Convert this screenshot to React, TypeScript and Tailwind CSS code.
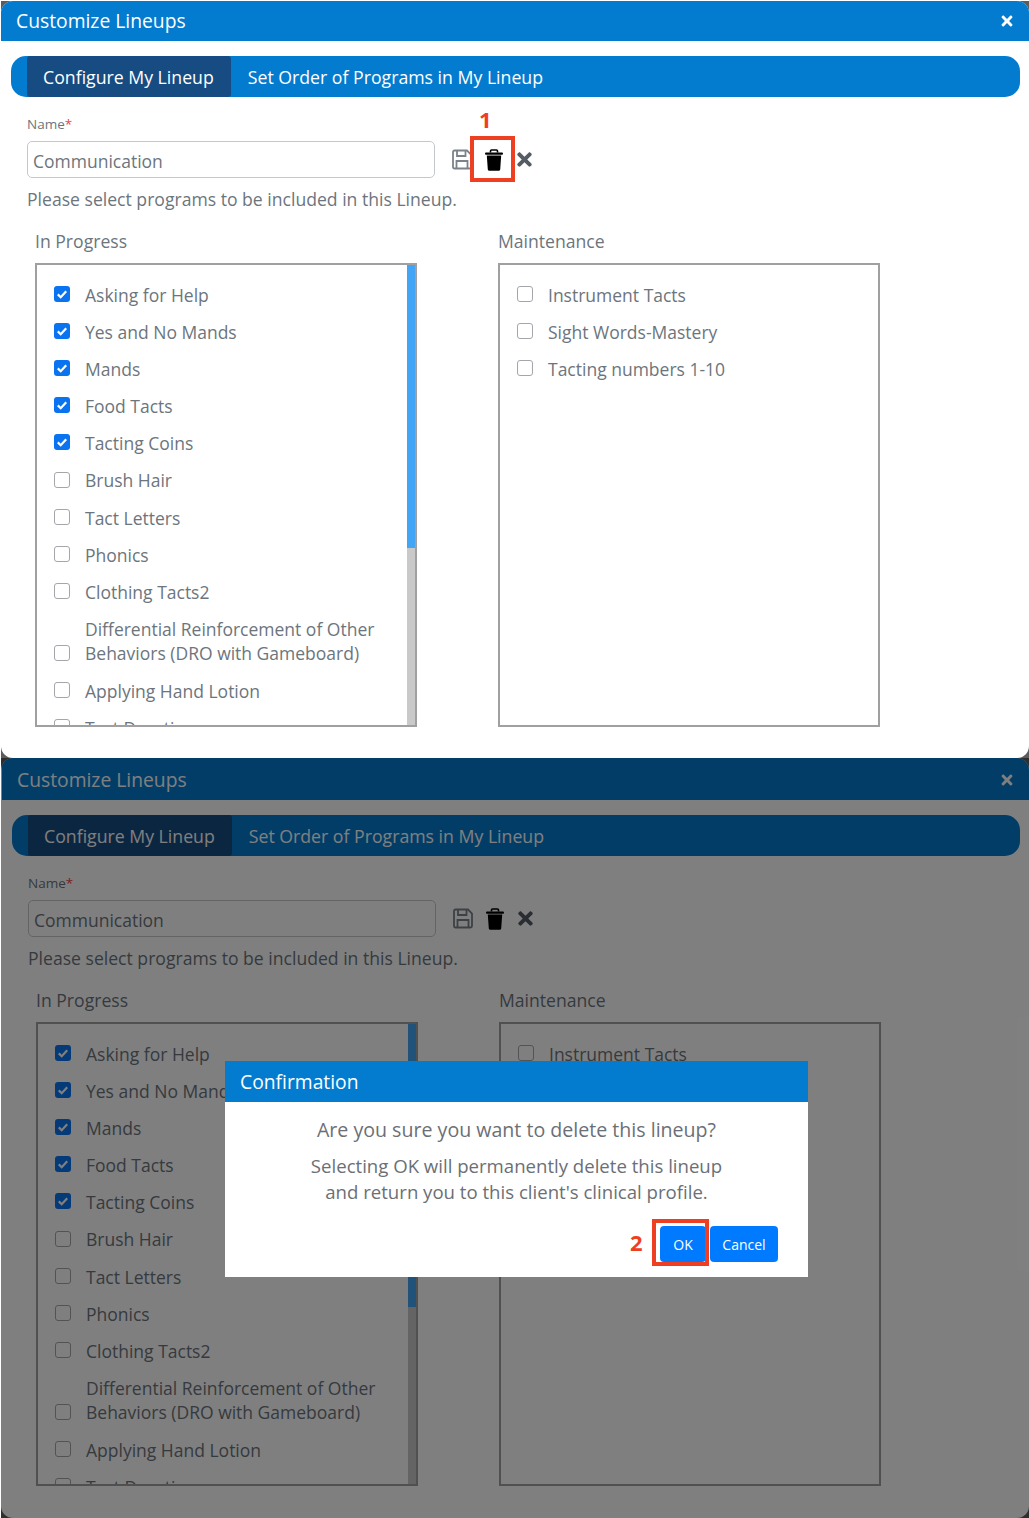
import React from "react";
import { FaTimes } from "react-icons/fa";

const FONT = "font-['Open_Sans','Noto_Sans',sans-serif]";

type Item = { label: React.ReactNode; checked?: boolean };

const inProgress: Item[] = [
  { label: "Asking for Help", checked: true },
  { label: "Yes and No Mands", checked: true },
  { label: "Mands", checked: true },
  { label: "Food Tacts", checked: true },
  { label: "Tacting Coins", checked: true },
  { label: "Brush Hair" },
  { label: "Tact Letters" },
  { label: "Phonics" },
  { label: "Clothing Tacts2" },
  { label: <>Differential Reinforcement of Other<br />Behaviors (DRO with Gameboard)</> },
  { label: "Applying Hand Lotion" },
  { label: "Tact Duration" },
];

const maintenance: Item[] = [
  { label: "Instrument Tacts" },
  { label: "Sight Words-Mastery" },
  { label: "Tacting numbers 1-10" },
];

function SaveIcon() {
  return (
    <svg viewBox="0 0 20 21" className="ml-[17px] h-[21px] w-[20px] shrink-0" fill="none" stroke="#7a828c" strokeWidth="1.8">
      <path d="M2.5 1.5h12.5l4 4v12.5a1.5 1.5 0 0 1-1.5 1.5h-15a1.5 1.5 0 0 1-1.5-1.5v-15a1.5 1.5 0 0 1 1.5-1.5z" />
      <path d="M5 1.5v5.5h8.5v-5.5" />
      <path d="M4.5 19.5v-7.5h11v7.5" />
    </svg>
  );
}

function TrashIcon() {
  return (
    <svg viewBox="0 0 18 22" className="ml-[13px] h-[22px] w-[18px] shrink-0" fill="#000">
      <path d="M5.5 3.5V2a1 1 0 0 1 1-1h5a1 1 0 0 1 1 1v1.5" fill="none" stroke="#000" strokeWidth="1.6" />
      <rect x="0" y="3.5" width="18" height="2.2" rx="1" />
      <path d="M1.8 6.5h14.4l-1 14a1.5 1.5 0 0 1-1.5 1.3H4.3a1.5 1.5 0 0 1-1.5-1.3z" />
    </svg>
  );
}

function Check({ checked }: { checked?: boolean }) {
  return checked ? (
    <span className="mb-[5.5px] flex h-4 w-4 shrink-0 items-center justify-center rounded-[3px] bg-[#0a74f0]">
      <svg viewBox="0 0 16 16" className="h-4 w-4">
        <path d="M3.8 8.4 6.7 11.2 12.2 5.2" fill="none" stroke="#fff" strokeWidth="2.2" />
      </svg>
    </span>
  ) : (
    <span className="mb-[5.5px] h-4 w-4 shrink-0 rounded-[3px] border border-[#a3a7ab] bg-white" />
  );
}

function ProgramBox({ title, items, scrollbar }: { title: string; items: Item[]; scrollbar?: boolean }) {
  return (
    <div className="w-[382px]">
      <div className="h-[34px] text-[17.6px] leading-[24px] text-[#6c757d]">{title}</div>
      <div className="flex h-[464px] overflow-hidden border-2 border-[#a0a0a0] bg-white">
        <ul className="min-w-0 flex-1 pt-[18px]">
          {items.map((it, i) => (
            <li key={i} className="mb-[12.5px] flex items-end pl-[17px] text-[17.5px] leading-[24.6px] text-[#6c757d]">
              <Check checked={it.checked} />
              <span className="ml-[15px] whitespace-nowrap">{it.label}</span>
            </li>
          ))}
        </ul>
        {scrollbar && (
          <div className="flex w-2 shrink-0 flex-col bg-[#c9c9c9]">
            <div className="h-[283px] bg-[#42a5f5]" />
          </div>
        )}
      </div>
    </div>
  );
}

function Marker({ className, n, numClass }: { className: string; n: string; numClass: string }) {
  return (
    <>
      <div className={`absolute border-4 border-[#ee3f22] ${className}`} />
      <div className={`absolute text-[22px] font-bold leading-none text-[#ee3f22] ${numClass}`}>{n}</div>
    </>
  );
}

function Panel({ children, second }: { children?: React.ReactNode; second?: boolean }) {
  return (
    <div className={`relative bg-[#5c5c5c] ${second ? "h-[760px]" : "h-[757px]"}`}>
      <div className={`flex h-full flex-col overflow-hidden rounded-[12px] bg-white ${second ? "pl-px" : ""}`}>
        <div className={`flex shrink-0 items-center justify-between bg-[#037bcf] pl-[15px] pr-[16px] text-white ${second ? "h-[42px] pt-[2px]" : "h-[40px]"}`}>
          <span className="text-[19.3px] leading-none">Customize Lineups</span>
          <FaTimes className="h-[16px] w-[12px]" />
        </div>
        <div className="ml-[10px] mr-[9px] mt-[15px] flex h-[41px] shrink-0 rounded-[15px] bg-[#037bcf] pl-[16px] text-[17.7px] text-white">
          <div className="flex items-center rounded-[3px] bg-[#174c82] pl-[16px] pr-[17px] pt-[2px]">Configure My Lineup</div>
          <div className="flex items-center px-[17px] pt-[2px]">Set Order of Programs in My Lineup</div>
        </div>
        <div className="pl-[26px]">
          <div className="mt-[18px] h-[19px] text-[13.5px] leading-[19px] text-[#6c757d]">
            Name<span className="text-[#ef4444]">*</span>
          </div>
          <div className="mt-[7px] flex items-center">
            <div className="flex h-[37px] w-[408px] items-center rounded-[5px] border border-[#c4c8cc] pl-[5px] pt-[3px] text-[17.5px] text-[#6c757d]">
              Communication
            </div>
            <SaveIcon />
            <TrashIcon />
            <FaTimes className="ml-[14px] h-[21px] w-[15px] text-[#555c66]" />
          </div>
          <div className="mt-[9px] h-[25px] text-[17.6px] leading-[25px] text-[#6c757d]">
            Please select programs to be included in this Lineup.
          </div>
          <div className="mt-[17px] flex gap-[81px] pl-[8px]">
            <ProgramBox title="In Progress" items={inProgress} scrollbar />
            <ProgramBox title="Maintenance" items={maintenance} />
          </div>
        </div>
      </div>
      {children}
    </div>
  );
}

export default function App() {
  return (
    <div className={`h-[1518px] w-[1029px] overflow-hidden bg-white pl-px pt-px ${FONT}`}>
      <Panel>
        <Marker className="left-[469px] top-[135px] h-[46px] w-[45px]" n="1" numClass="left-[478px] top-[107px]" />
      </Panel>
      <Panel second>
        <div className="absolute inset-0 bg-black/50" />
        <div className="absolute left-[224px] top-[303px] h-[216px] w-[583px] bg-white">
          <div className="flex h-[41px] items-center bg-[#037bcf] pl-[15px] pt-[2px] text-[19.3px] text-white">Confirmation</div>
          <div className="pt-[14px] text-center text-[#6b6f76]">
            <div className="text-[19.6px] leading-[28px]">Are you sure you want to delete this lineup?</div>
            <div className="mt-[9px] text-[18.6px] leading-[26px]">
              Selecting OK will permanently delete this lineup
              <br />
              and return you to this client's clinical profile.
            </div>
          </div>
          <div className="absolute right-[30px] top-[165px] flex gap-[4px] text-[14px] text-white">
            <div className="flex h-[36px] w-[46px] items-center justify-center rounded-[4px] bg-[#007bff]">OK</div>
            <div className="flex h-[36px] w-[68px] items-center justify-center rounded-[4px] bg-[#007bff]">Cancel</div>
          </div>
          <Marker className="left-[427px] top-[158px] h-[47px] w-[57px]" n="2" numClass="left-[405px] top-[170px]" />
        </div>
      </Panel>
    </div>
  );
}
